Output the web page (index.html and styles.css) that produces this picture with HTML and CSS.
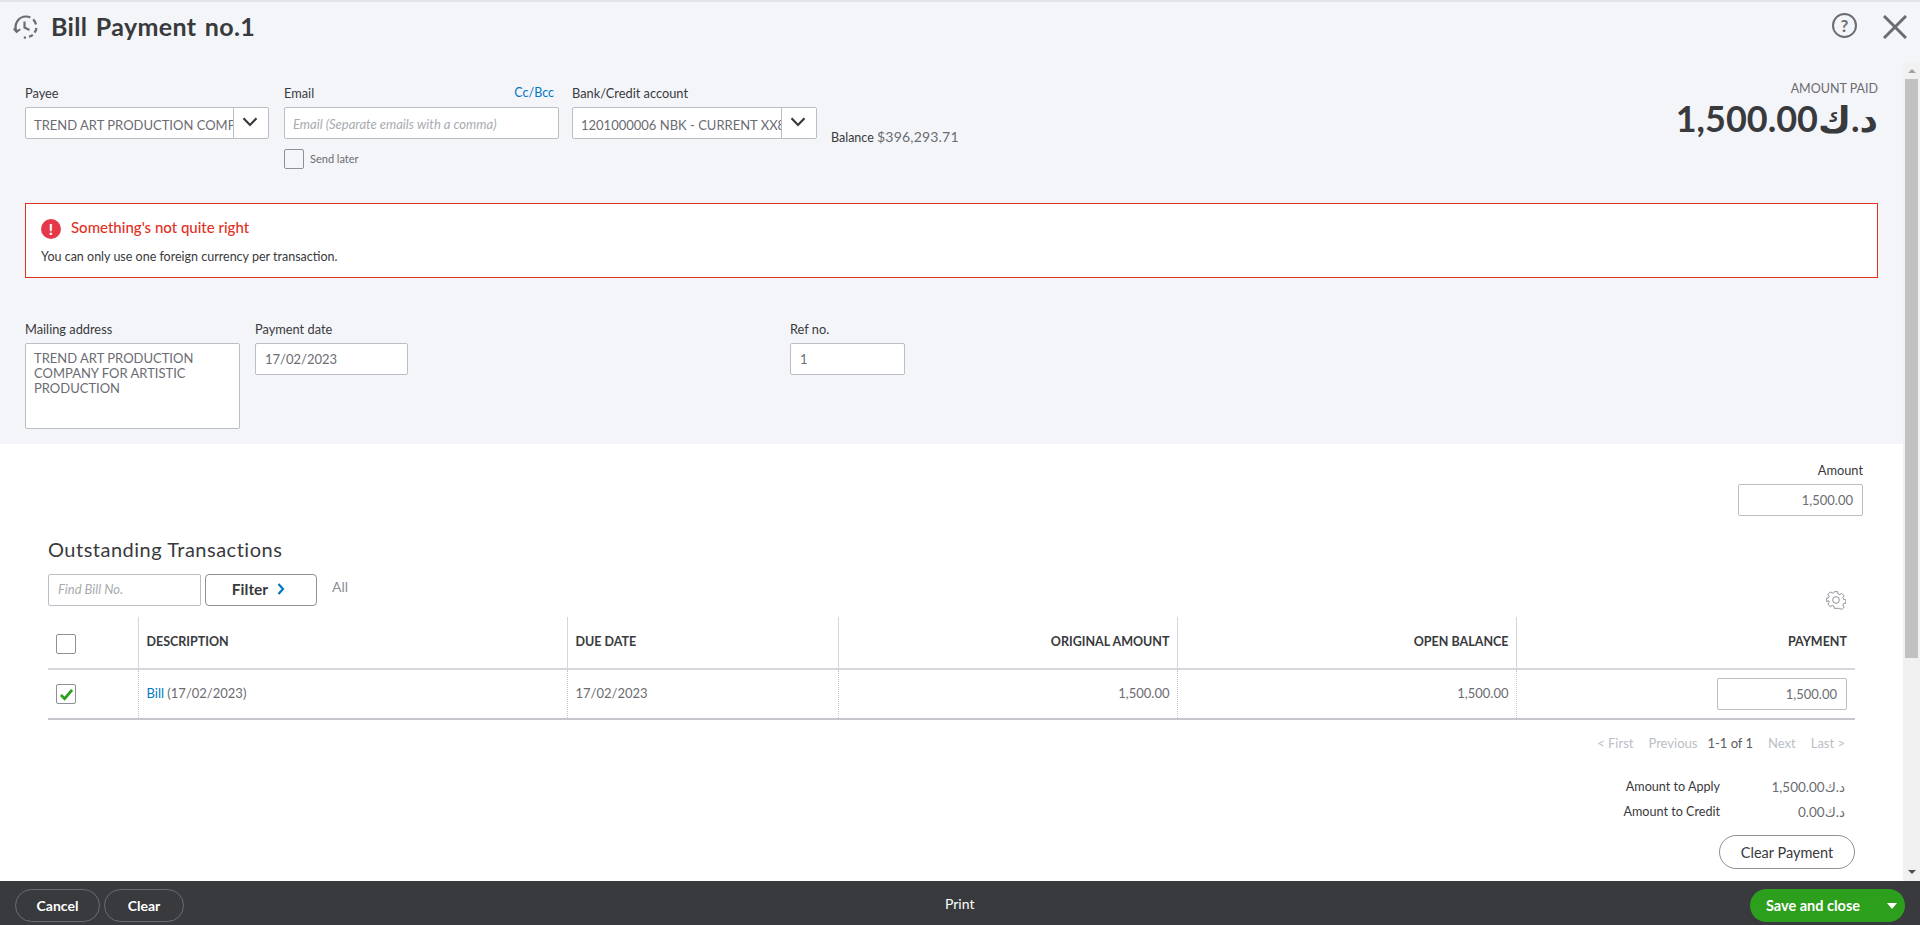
FILE: index.html
```html
<!DOCTYPE html>
<html lang="en">
<head>
<meta charset="utf-8">
<title>Bill Payment no.1</title>
<link rel="stylesheet" href="styles.css">
</head>
<body>
<div class="app">
  <header class="topbar">
    <svg class="history" viewBox="0 0 26 26" width="26" height="26" fill="none" stroke="#6b6c72" stroke-width="2.2">
      <path d="M3.6 17.5A10.5 10.5 0 0 1 13 2.5c1.6 0 3 .3 4.3 1"/>
      <path d="M20.2 5.4a10.5 10.5 0 0 1 2.8 5"/>
      <path d="M23.4 14a10.500 10.500 0 0 1-1.800 4.600"/>
      <path d="M19.800 20.800a10.500 10.500 0 0 1-3.800 2"/>
      <path d="M13 23.600h-2.200"/>
      <path d="M11.500 7.500v6l5 2.500"/>
      <path d="M0.800 14.500l2.800 3.300 3.600-2.600" stroke-width="2"/>
    </svg>
    <h1 class="title">Bill Payment no.1</h1>
    <span class="help">?</span>
    <svg class="close" viewBox="0 0 24 24" width="24" height="24" stroke="#6b6c72" stroke-width="3"><path d="M1 1l22 22M23 1L1 23"/></svg>
  </header>

  <div class="workspace">
    <main class="content">
      <section class="form-top">
        <div class="row">
          <div class="field payee">
            <label class="label">Payee</label>
            <div class="select"><span class="select-value">TREND ART PRODUCTION COMPA</span><span class="select-btn"><svg viewBox="0 0 16 10" width="16" height="10" fill="none" stroke="#393a3d" stroke-width="2.200"><path d="M1.500 1.200L8 8l6.500-6.800"/></svg></span></div>
          </div>
          <div class="field email">
            <div class="label-row"><label class="label">Email</label><a class="link small-link">Cc/Bcc</a></div>
            <div class="input placeholder email-input">Email (Separate emails with a comma)</div>
            <div class="send-later"><span class="checkbox"></span><span>Send later</span></div>
          </div>
          <div class="field bank">
            <label class="label">Bank/Credit account</label>
            <div class="select"><span class="select-value">1201000006 NBK - CURRENT XX8</span><span class="select-btn"><svg viewBox="0 0 16 10" width="16" height="10" fill="none" stroke="#393a3d" stroke-width="2.200"><path d="M1.500 1.200L8 8l6.500-6.800"/></svg></span></div>
          </div>
          <div class="balance"><b>Balance</b> <span class="balance-value">$396,293.71</span></div>
          <div class="amount-paid">
            <div class="amount-label">AMOUNT PAID</div>
            <div class="amount-value">د.ك1,500.00</div>
          </div>
        </div>

        <div class="alert">
          <div class="alert-head"><span class="alert-icon">!</span><span class="alert-title">Something's not quite right</span></div>
          <p class="alert-body">You can only use one foreign currency per transaction.</p>
        </div>

        <div class="row second">
          <div class="field address">
            <label class="label">Mailing address</label>
            <div class="textarea">TREND ART PRODUCTION COMPANY FOR ARTISTIC PRODUCTION</div>
          </div>
          <div class="field date">
            <label class="label">Payment date</label>
            <div class="input">17/02/2023</div>
          </div>
          <div class="field ref">
            <label class="label">Ref no.</label>
            <div class="input">1</div>
          </div>
        </div>
      </section>

      <section class="form-bottom">
        <div class="amount-field">
          <label class="label">Amount</label>
          <div class="input right amount-input">1,500.00</div>
        </div>

        <h2 class="section-title">Outstanding Transactions</h2>

        <div class="toolbar">
          <div class="input placeholder find">Find Bill No.</div>
          <button class="filter">Filter <svg viewBox="0 0 8 12" width="8" height="12" fill="none" stroke="#0077c5" stroke-width="2.200"><path d="M1.500 1l4.500 5-4.500 5"/></svg></button>
          <span class="all">All</span>
          <svg class="gear" viewBox="0 0 24 24" width="20" height="20" fill="none" stroke="#8d9096" stroke-width="1.200"><path d="M10 2h4l.6 2.800 1.900.8 2.400-1.500 2.800 2.800-1.500 2.400.8 1.900 2.800.6v4l-2.800.6-.8 1.900 1.500 2.400-2.800 2.800-2.400-1.500-1.900.8L14 22h-4l-.6-2.800-1.900-.8-2.400 1.500-2.800-2.800 1.500-2.400-.8-1.900L.2 14v-4L3 9.400l.8-1.900-1.500-2.400 2.800-2.800 2.400 1.500 1.900-.8z"/><circle cx="12" cy="12" r="4"/></svg>
        </div>

        <table class="grid">
          <colgroup>
            <col class="c-check"><col class="c-desc"><col class="c-date"><col class="c-num"><col class="c-num"><col>
          </colgroup>
          <thead>
            <tr>
              <th class="check-cell head-check"><span class="checkbox"></span></th>
              <th>DESCRIPTION</th>
              <th>DUE DATE</th>
              <th class="num">ORIGINAL AMOUNT</th>
              <th class="num">OPEN BALANCE</th>
              <th class="num">PAYMENT</th>
            </tr>
          </thead>
          <tbody>
            <tr>
              <td class="check-cell"><span class="checkbox checked"><svg viewBox="0 0 16 14" width="15" height="13" fill="none" stroke="#2ca01c" stroke-width="3"><path d="M2 7.500l4 4L14 2"/></svg></span></td>
              <td><a class="link">Bill</a> (17/02/2023)</td>
              <td>17/02/2023</td>
              <td class="num">1,500.00</td>
              <td class="num">1,500.00</td>
              <td class="num pay-cell"><div class="input right pay-input">1,500.00</div></td>
            </tr>
          </tbody>
        </table>

        <nav class="pager">
          <span class="off">&lt; First</span><span class="off">Previous</span><span class="cur">1-1 of 1</span><span class="off">Next</span><span class="off">Last &gt;</span>
        </nav>

        <dl class="totals">
          <div class="total-row"><dt>Amount to Apply</dt><dd>د.ك1,500.00</dd></div>
          <div class="total-row"><dt>Amount to Credit</dt><dd>د.ك0.00</dd></div>
        </dl>

        <div class="clear-wrap"><button class="pill">Clear Payment</button></div>
      </section>
    </main>

    <div class="scrollbar">
      <span class="arrow up"></span>
      <div class="track"><div class="thumb"></div></div>
      <span class="arrow down"></span>
    </div>
  </div>

  <footer class="footer">
    <div class="foot-left">
      <button class="foot-btn cancel">Cancel</button>
      <button class="foot-btn clear">Clear</button>
    </div>
    <a class="print">Print</a>
    <div class="save"><span class="save-text">Save and close</span><span class="save-caret"></span></div>
  </footer>
</div>
</body>
</html>
```
FILE: styles.css
```css
* { box-sizing: border-box; }
html, body { margin: 0; height: 100%; overflow: hidden; }
body { font-family: "Lato", "DejaVu Sans", sans-serif; font-size: 13px; color: #393a3d; background: #f4f5f8; }
.app { display: flex; flex-direction: column; height: 925px; overflow: hidden; }

.topbar { flex: none; height: 62px; border-top: 2px solid #e3e5e8; display: flex; align-items: flex-start; padding: 10px 13px 0 13px; background: #f4f5f8; }
.history { flex: none; margin-top: 2px; }
.title { margin: 0 0 0 12px; font-size: 25px; line-height: 28px; font-weight: 700; color: #393a3d; word-spacing: 2px; letter-spacing: .35px; }
.help { margin: 1px 0 0 auto; width: 25px; height: 25px; border: 2px solid #6b6c72; border-radius: 50%; display: flex; align-items: center; justify-content: center; font-size: 17px; font-weight: 700; color: #6b6c72; }
.close { margin: 3px 0 0 26px; }

.workspace { flex: 1; min-height: 0; display: flex; }
.content { flex: 1; min-width: 0; overflow: hidden; }

.form-top { background: #f4f5f8; padding: 22px 25px 15px; height: 382px; }
.row { display: flex; align-items: flex-start; height: 85px; }
.row.second { margin-top: 42px; height: 109px; }
.field { display: flex; flex-direction: column; flex: none; }
.label { display: block; height: 18px; line-height: 18px; margin-bottom: 5px; font-size: 12.800px; color: #393a3d; }
.label-row { display: flex; justify-content: space-between; padding-right: 5px; }
.link { color: #0077c5; }
.small-link { font-size: 12.500px; line-height: 18px; }

.payee { width: 244px; }
.email { width: 275px; margin-left: 15px; }
.bank { width: 245px; margin-left: 13px; }
.address { width: 215px; }
.date { width: 153px; margin-left: 15px; }
.ref { width: 115px; margin-left: 382px; }

.input, .select, .textarea { background: #fff; border: 1px solid #babec5; border-radius: 2px; color: #6b6c72; font-size: 13px; }
.input { height: 32px; line-height: 30px; padding: 0 9px; white-space: nowrap; overflow: hidden; }
.email-input { padding: 1px 8px 0; }
.placeholder { font-style: italic; color: #a8abb1; }
.right { text-align: right; }
.select { height: 32px; display: flex; }
.select-value { flex: 1; min-width: 0; padding: 2px 0 0 8px; line-height: 30px; white-space: nowrap; overflow: hidden; }
.select-btn { flex: none; width: 35px; border-left: 1px solid #babec5; display: flex; align-items: center; justify-content: center; padding: 0 2px 2px 0; }
.textarea { height: 86px; padding: 7px 8px; line-height: 15px; }

.send-later { display: flex; align-items: center; gap: 6px; margin-top: 10px; font-size: 11px; color: #6b6c72; }
.send-later span:last-child { position: relative; top: -1px; }
.checkbox { display: inline-flex; align-items: center; justify-content: center; width: 20px; height: 20px; border: 1px solid #8d9096; border-radius: 2px; background: transparent; flex: none; }
.checkbox.checked { background: #fff; }

.balance { margin: 44px 0 0 14px; font-size: 12.500px; color: #6b6c72; line-height: 18px; white-space: nowrap; }
.balance b { font-weight: 400; color: #393a3d; }
.balance-value { font-size: 14px; letter-spacing: .2px; }
.amount-paid { margin: -4px 0 0 auto; text-align: right; }
.amount-label { font-size: 12.500px; line-height: 18px; color: #6b6c72; }
.amount-value { font-size: 36px; line-height: 40px; font-weight: 700; color: #393a3d; }

.alert { height: 75px; margin-top: 34px; background: #fff; border: 1px solid #e0301e; padding: 15px 15px 0; }
.alert-head { display: flex; align-items: center; height: 20px; }
.alert-icon { width: 20px; height: 20px; border-radius: 50%; background: #e5384a; color: #fff; font-weight: 900; font-size: 15px; display: flex; align-items: center; justify-content: center; }
.alert-title { margin: -5px 0 0 10px; font-size: 15px; font-weight: 500; color: #e0301e; }
.alert-body { margin: 9px 0 0; font-size: 12.500px; line-height: 18px; color: #393a3d; }

.form-bottom { background: #fff; padding: 17px 48px 0; height: 437px; }
.amount-field { display: flex; flex-direction: column; align-items: flex-end; margin-right: -8px; }
.amount-input { width: 125px; }
.section-title { margin: 21px 0 0; font-size: 20px; line-height: 24px; font-weight: 400; letter-spacing: .5px; color: #393a3d; }
.toolbar { display: flex; align-items: flex-start; margin-top: 13px; height: 32px; }
.find { width: 153px; line-height: 28px; }
.filter { width: 112px; height: 32px; margin-left: 4px; background: transparent; border: 1px solid #8d9096; border-radius: 4px; font: 700 15.500px "Lato", sans-serif; color: #393a3d; display: flex; align-items: center; justify-content: center; gap: 9px; padding: 0 5px 2px 0; }
.all { margin: 4px 0 0 15px; font-size: 14px; color: #8d9096; }
.gear { margin: 16px 9px 0 auto; }

.grid { width: 1807px; margin-top: 11px; border-collapse: collapse; table-layout: fixed; }
.c-check { width: 90px; }
.c-desc { width: 429px; }
.c-date { width: 271px; }
.c-num { width: 339px; }
.grid th { height: 52px; padding: 0 8px 3px; border-left: 1px solid #d4d7dc; border-bottom: 2px solid #d4d7dc; text-align: left; font-size: 12.500px; font-weight: 700; color: #393a3d; }
.grid td { height: 50px; padding: 0 8px 2px; border-left: 1px dotted #c4c7cc; border-bottom: 2px solid #c4c7cc; font-size: 13px; color: #6b6c72; }
.grid th:first-child, .grid td:first-child { border-left: 0; }
.grid .num { text-align: right; padding-right: 7px; }
.grid .num:last-child { padding-right: 8px; }
.grid .check-cell { padding: 0 0 0 8px; }
.grid .head-check { padding-top: 3px; }
.grid .pay-cell { padding-bottom: 0; }
.check-cell .checkbox { vertical-align: middle; }
.pay-input { width: 130px; margin-left: auto; }

.pager { display: flex; justify-content: flex-end; margin-top: 14px; padding-right: 10px; font-size: 13px; line-height: 18px; }
.pager span { margin-left: 15px; }
.pager .cur { margin-left: 10px; }
.off { color: #babec5; }
.cur { color: #5b5c60; }

.totals { margin: 22px 0 0; }
.total-row { display: grid; grid-template-columns: 1fr 125px; height: 25px; padding-right: 10px; align-items: center; text-align: right; }
dt { color: #393a3d; font-size: 12.600px; }
dd { margin: 0; color: #6b6c72; font-size: 13.500px; }

.clear-wrap { display: flex; justify-content: flex-end; margin-top: 11px; }
.pill { width: 136px; height: 34px; background: #fff; border: 1px solid #8d9096; border-radius: 17px; font: 400 14.500px "Lato", sans-serif; color: #393a3d; padding: 0; }

.scrollbar { flex: none; width: 17px; background: #f1f1f1; display: flex; flex-direction: column; align-items: center; }
.arrow { flex: none; width: 0; height: 0; border-left: 4px solid transparent; border-right: 4px solid transparent; }
.arrow.up { border-bottom: 4px solid #a3a3a3; margin: 7px 0 6px; }
.arrow.down { border-top: 4px solid #505050; margin: 6px 0 7px; }
.track { flex: 1; width: 100%; padding: 0 2px; }
.thumb { height: 579px; background: #c1c1c1; }

.footer { flex: none; height: 44px; background: #393a3d; display: flex; align-items: center; position: relative; padding: 5px 15px 0; color: #fff; }
.foot-left { display: flex; gap: 4px; }
.foot-btn { height: 33px; background: transparent; border: 1px solid #6b6c72; border-radius: 17px; color: #fff; font: 700 14px "Lato", sans-serif; padding: 0; }
.cancel { width: 85px; }
.clear { width: 80px; }
.print { position: absolute; left: 945px; font-size: 14px; line-height: 20px; top: 13px; }
.save { margin-left: auto; width: 155px; height: 33px; border-radius: 17px; background: #2ca01c; display: flex; align-items: center; justify-content: space-between; padding: 0 8px 0 16px; font-size: 14.500px; font-weight: 700; }
.save-caret { width: 0; height: 0; border-left: 5px solid transparent; border-right: 5px solid transparent; border-top: 6px solid #fff; }
```
